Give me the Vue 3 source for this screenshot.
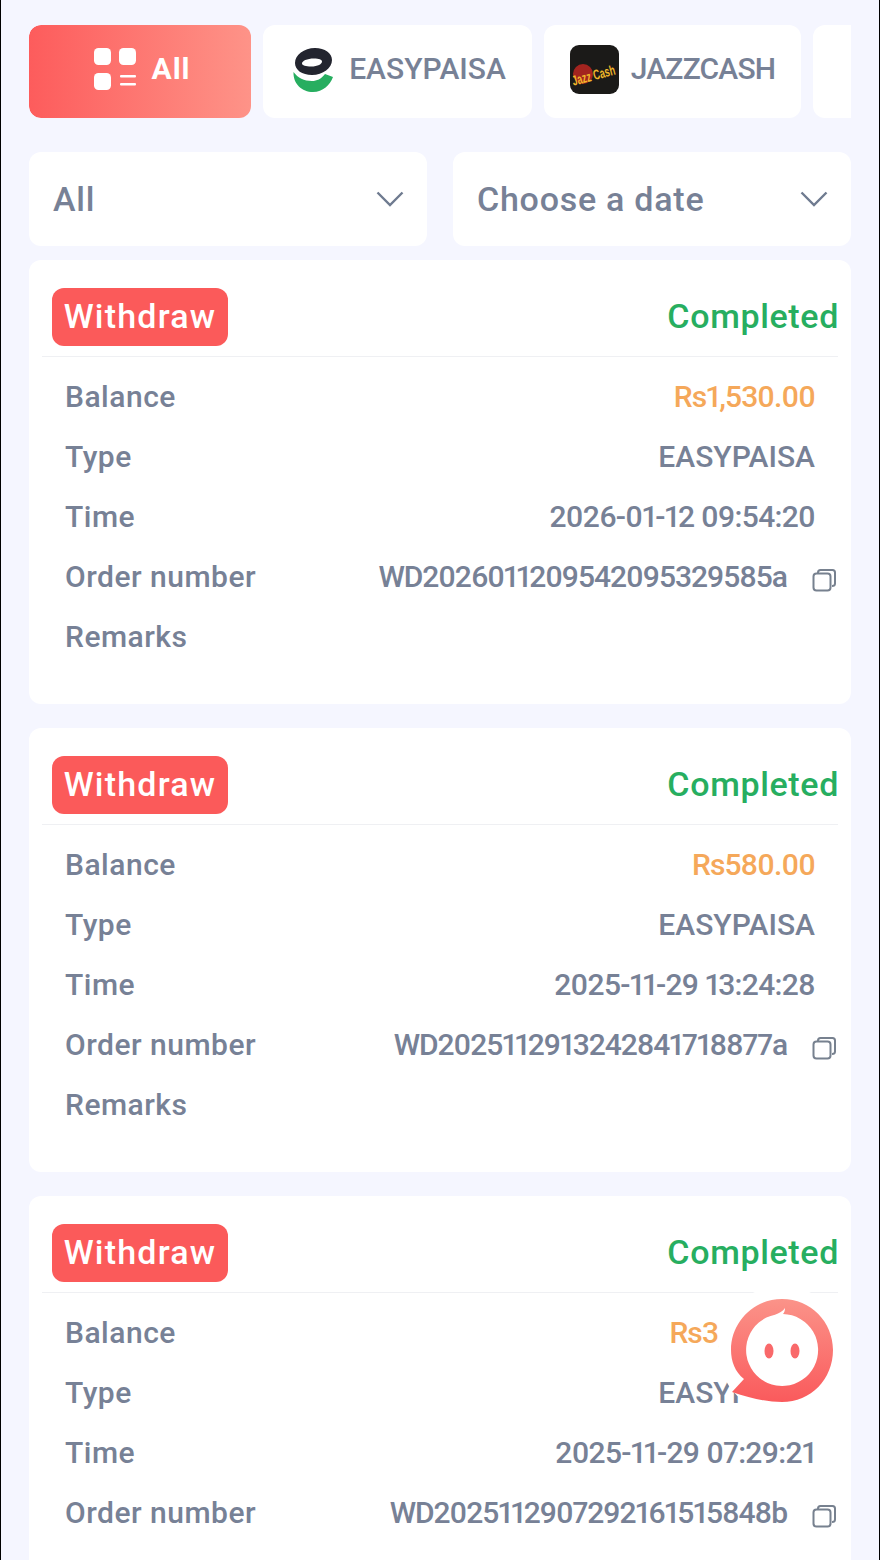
<template>
  <div class="page">
    <div class="tabs">
      <div class="tab tab-all">
        <svg class="all-icon" width="42" height="42" viewBox="0 0 42 42">
          <rect x="0" y="0" width="17" height="17" rx="4.5" fill="#fff" />
          <rect x="25" y="0" width="17" height="17" rx="4.5" fill="#fff" />
          <rect x="0" y="25" width="17" height="17" rx="4.5" fill="#fff" />
          <rect x="26" y="27" width="16" height="2.6" rx="1" fill="#fff" />
          <rect x="26" y="35" width="16" height="2.6" rx="1" fill="#fff" />
        </svg>
        <span>All</span>
      </div>
      <div class="tab tab-easy">
        <svg width="42" height="46" viewBox="0 0 42 46">
          <path d="M1.5 25 C1 37 10 45 21 45 C31 45 38 38 41 30 L33 27 C29 32 25 34 20 34 C12 34 6 31 1.5 25 Z" fill="#27ae60" />
          <path fill-rule="evenodd" d="M23 1 C33 1 40 6 40 13 C40 21 31 28 20 28 C10 28 3 23 3 16 C3 8 12 1 23 1 Z M22 11.5 C15 11.5 10 14 10 16.5 C10 18.5 14 19.5 19 19.5 C26 19.5 30 17 30 14.5 C30 12.5 27 11.5 22 11.5 Z" fill="#23252f" />
        </svg>
        <span>EASYPAISA</span>
      </div>
      <div class="tab tab-jazz">
        <svg width="49" height="49" viewBox="0 0 49 49">
          <rect width="49" height="49" rx="9" fill="#1b1a18" />
          <ellipse cx="13" cy="29" rx="10" ry="10" fill="#a3241f" />
          <text x="1" y="35" transform="rotate(-15 24 28)" textLength="44" lengthAdjust="spacingAndGlyphs" class="jazz-text">Jazz Cash</text>
        </svg>
        <span class="jazz-label">JAZZCASH</span>
      </div>
      <div class="tab tab-more"></div>
    </div>

    <div class="filters">
      <div v-for="f in filters" :key="f" class="filter">
        <span>{{ f }}</span>
        <svg width="28" height="16" viewBox="0 0 28 16">
          <path d="M1.5 1.5 L14 14 L26.5 1.5" fill="none" stroke="#6f7b90" stroke-width="2.4" />
        </svg>
      </div>
    </div>

    <div v-for="r in records" :key="r.order" class="card">
      <div class="card-head">
        <span class="badge">Withdraw</span>
        <span class="status">Completed</span>
      </div>
      <div class="rows">
        <div class="row">
          <span>Balance</span>
          <span class="value amount">{{ r.balance }}</span>
        </div>
        <div class="row">
          <span>Type</span>
          <span class="type">EASYPAISA</span>
        </div>
        <div class="row">
          <span>Time</span>
          <span class="value time">{{ r.time }}</span>
        </div>
        <div class="row">
          <span>Order number</span>
          <span class="value order">
            {{ r.order }}
            <svg class="copy" width="25" height="25" viewBox="0 0 25 25">
              <rect x="1.5" y="5.5" width="17" height="17" rx="3" fill="#fff" stroke="#77818f" stroke-width="2" />
              <path d="M6 5.5 V4.5 C6 3 7 2 8.5 2 H20.5 C22 2 23 3 23 4.5 V15.5 C23 17 22 18 20 18" fill="none" stroke="#77818f" stroke-width="2" />
            </svg>
          </span>
        </div>
        <div class="row">
          <span>Remarks</span>
        </div>
      </div>
    </div>

    <svg class="chat" width="132" height="132" viewBox="0 0 132 132">
      <defs>
        <linearGradient id="chatGrad" x1="0" y1="0" x2="0" y2="1">
          <stop offset="0" stop-color="#fb9389" />
          <stop offset="1" stop-color="#fa5a5c" />
        </linearGradient>
      </defs>
      <circle cx="66" cy="66" r="64" fill="#fff" />
      <path d="M66 15 C95 15 117 38 117 66 C117 95 95 118 66 118 C50 118 34 114 16 108 L28 95 C19 88 15 77 15 66 C15 38 38 15 66 15 Z" fill="url(#chatGrad)" />
      <path d="M69 24 C69 27 68 29 67 30 A36 36 0 1 1 59 30.7 C63 29.5 67 27 69 24 Z" fill="#fff" />
      <ellipse cx="53" cy="67" rx="4.5" ry="7.5" fill="#f9696a" />
      <ellipse cx="79" cy="67" rx="4.5" ry="7.5" fill="#f9696a" />
    </svg>
  </div>
</template>

<script setup>
const filters = ['All', 'Choose a date'];

const records = [
  { balance: 'Rs1,530.00', time: '2026-01-12 09:54:20', order: 'WD2026011209542095329585a' },
  { balance: 'Rs580.00', time: '2025-11-29 13:24:28', order: 'WD2025112913242841718877a' },
  { balance: 'Rs3,000.00', time: '2025-11-29 07:29:21', order: 'WD2025112907292161515848b' },
];
</script>

<style>
html,
body {
  margin: 0;
  background: #f5f6ff;
}
</style>

<style scoped>
.page {
  position: relative;
  height: 1560px;
  overflow: hidden;
  box-sizing: border-box;
  padding: 25px 28px 0;
  background: #f5f6ff;
  border-left: 1px solid #000;
  border-right: 1px solid #000;
  font-family: Roboto, "Noto Sans", sans-serif;
  font-weight: 500;
  font-size: 30px;
  letter-spacing: 0.5px;
  color: #778196;
}

.tabs {
  display: flex;
  gap: 12px;
  overflow: hidden;
  border-radius: 12px 0 0 12px;
}

.tab {
  flex: none;
  height: 93px;
  box-sizing: border-box;
  padding-bottom: 4px;
  display: flex;
  align-items: center;
  justify-content: center;
  gap: 15px;
  background: #fff;
  border-radius: 12px;
}

.tab span {
  padding-bottom: 3px;
}

.tab-all {
  width: 222px;
  padding-left: 5px;
  background: linear-gradient(90deg, #fd5c5c, #fe9388);
  color: #fff;
  font-weight: 700;
  letter-spacing: 1px;
}

.all-icon {
  margin-bottom: 2px;
}

.tab-easy {
  width: 269px;
  padding-left: 3px;
  letter-spacing: 0;
}

.tab-jazz {
  width: 257px;
  gap: 12px;
}

.jazz-label {
  letter-spacing: -0.8px;
}

.tab-more {
  width: 60px;
}

.jazz-text {
  font-family: "Liberation Sans", sans-serif;
  font-size: 14px;
  font-weight: 700;
  fill: #f0b62a;
  letter-spacing: 0;
}

.filters {
  display: grid;
  grid-template-columns: 1fr 1fr;
  gap: 26px;
  margin-top: 34px;
}

.filter {
  height: 94px;
  box-sizing: border-box;
  padding: 0 23px 0 24px;
  display: flex;
  align-items: center;
  justify-content: space-between;
  background: #fff;
  border-radius: 12px;
  font-size: 34px;
  letter-spacing: 0.75px;
}

.card {
  margin-bottom: 24.5px;
  height: 443.5px;
  box-sizing: border-box;
  padding: 28px 13px 0;
  background: #fff;
  border-radius: 12px;
}

.filters + .card {
  margin-top: 14px;
}

.card-head {
  display: flex;
  align-items: flex-start;
  justify-content: space-between;
  height: 69px;
  box-sizing: border-box;
  padding-left: 10px;
  border-bottom: 1px solid #eff0f3;
}

.badge {
  width: 176px;
  height: 58px;
  line-height: 57px;
  text-align: center;
  background: #fb5a5a;
  border-radius: 12px;
  color: #fff;
  font-size: 34px;
  letter-spacing: 1.2px;
}

.status {
  line-height: 56px;
  color: #27ae60;
  font-size: 34px;
  letter-spacing: 0.65px;
  margin-right: -1px;
}

.rows {
  padding: 9px 0 0 10px;
}

.row {
  display: flex;
  align-items: center;
  justify-content: space-between;
  height: 60px;
  padding: 0 23px 0 13px;
}

.type {
  letter-spacing: 0;
}

.value {
  font-variant-numeric: proportional-nums;
}

.amount {
  color: #f5a85a;
  letter-spacing: -0.9px;
}

.time {
  letter-spacing: -0.7px;
}

.order {
  position: relative;
  margin-right: 28px;
  letter-spacing: -1.05px;
}

.copy {
  position: absolute;
  right: -50px;
  top: 9px;
}

.chat {
  position: absolute;
  left: 715px;
  top: 1284px;
}
</style>
